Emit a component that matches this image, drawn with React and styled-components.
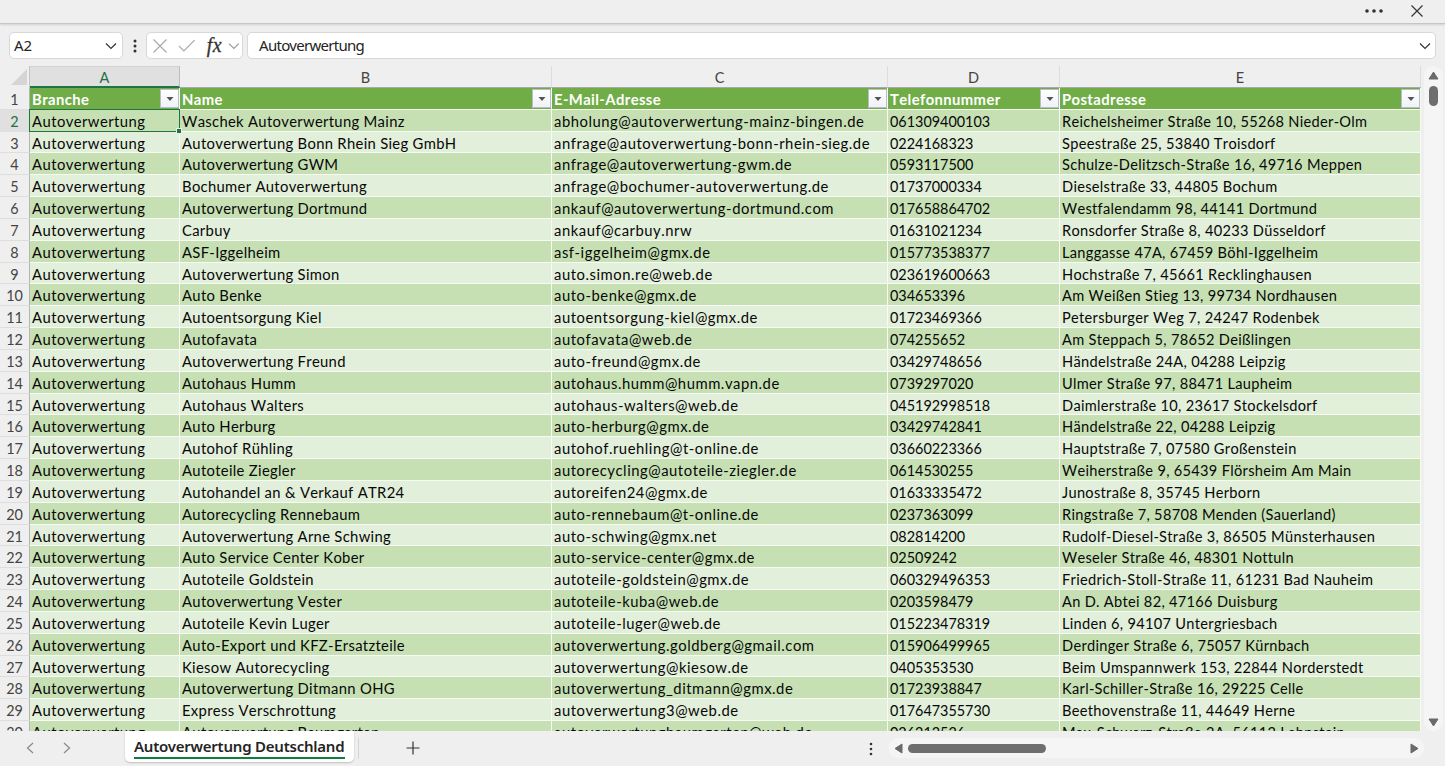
import React, { useState } from 'react';
import styled, { createGlobalStyle, css } from 'styled-components';

const COLUMNS = '150px 372px 336px 172px 361px';
const ROW_HEIGHT = 21.83;

const columns = [
    { id: 'A', title: 'Branche', size: 14.8, spacing: 0.44 },
    { id: 'B', title: 'Name', size: 14.8, spacing: 0.31 },
    { id: 'C', title: 'E-Mail-Adresse', size: 14.8, spacing: 0.54 },
    { id: 'D', title: 'Telefonnummer', size: 14.4, spacing: 0 },
    { id: 'E', title: 'Postadresse', size: 14.6, spacing: 0.3 },
];

const entries = [
    ['Waschek Autoverwertung Mainz', 'abholung@autoverwertung-mainz-bingen.de', '061309400103', 'Reichelsheimer Straße 10, 55268 Nieder-Olm'],
    ['Autoverwertung Bonn Rhein Sieg GmbH', 'anfrage@autoverwertung-bonn-rhein-sieg.de', '0224168323', 'Speestraße 25, 53840 Troisdorf'],
    ['Autoverwertung GWM', 'anfrage@autoverwertung-gwm.de', '0593117500', 'Schulze-Delitzsch-Straße 16, 49716 Meppen'],
    ['Bochumer Autoverwertung', 'anfrage@bochumer-autoverwertung.de', '01737000334', 'Dieselstraße 33, 44805 Bochum'],
    ['Autoverwertung Dortmund', 'ankauf@autoverwertung-dortmund.com', '017658864702', 'Westfalendamm 98, 44141 Dortmund'],
    ['Carbuy', 'ankauf@carbuy.nrw', '01631021234', 'Ronsdorfer Straße 8, 40233 Düsseldorf'],
    ['ASF-Iggelheim', 'asf-iggelheim@gmx.de', '015773538377', 'Langgasse 47A, 67459 Böhl-Iggelheim'],
    ['Autoverwertung Simon', 'auto.simon.re@web.de', '023619600663', 'Hochstraße 7, 45661 Recklinghausen'],
    ['Auto Benke', 'auto-benke@gmx.de', '034653396', 'Am Weißen Stieg 13, 99734 Nordhausen'],
    ['Autoentsorgung Kiel', 'autoentsorgung-kiel@gmx.de', '01723469366', 'Petersburger Weg 7, 24247 Rodenbek'],
    ['Autofavata', 'autofavata@web.de', '074255652', 'Am Steppach 5, 78652 Deißlingen'],
    ['Autoverwertung Freund', 'auto-freund@gmx.de', '03429748656', 'Händelstraße 24A, 04288 Leipzig'],
    ['Autohaus Humm', 'autohaus.humm@humm.vapn.de', '0739297020', 'Ulmer Straße 97, 88471 Laupheim'],
    ['Autohaus Walters', 'autohaus-walters@web.de', '045192998518', 'Daimlerstraße 10, 23617 Stockelsdorf'],
    ['Auto Herburg', 'auto-herburg@gmx.de', '03429742841', 'Händelstraße 22, 04288 Leipzig'],
    ['Autohof Rühling', 'autohof.ruehling@t-online.de', '03660223366', 'Hauptstraße 7, 07580 Großenstein'],
    ['Autoteile Ziegler', 'autorecycling@autoteile-ziegler.de', '0614530255', 'Weiherstraße 9, 65439 Flörsheim Am Main'],
    ['Autohandel an & Verkauf ATR24', 'autoreifen24@gmx.de', '01633335472', 'Junostraße 8, 35745 Herborn'],
    ['Autorecycling Rennebaum', 'auto-rennebaum@t-online.de', '0237363099', 'Ringstraße 7, 58708 Menden (Sauerland)'],
    ['Autoverwertung Arne Schwing', 'auto-schwing@gmx.net', '082814200', 'Rudolf-Diesel-Straße 3, 86505 Münsterhausen'],
    ['Auto Service Center Kober', 'auto-service-center@gmx.de', '02509242', 'Weseler Straße 46, 48301 Nottuln'],
    ['Autoteile Goldstein', 'autoteile-goldstein@gmx.de', '060329496353', 'Friedrich-Stoll-Straße 11, 61231 Bad Nauheim'],
    ['Autoverwertung Vester', 'autoteile-kuba@web.de', '0203598479', 'An D. Abtei 82, 47166 Duisburg'],
    ['Autoteile Kevin Luger', 'autoteile-luger@web.de', '015223478319', 'Linden 6, 94107 Untergriesbach'],
    ['Auto-Export und KFZ-Ersatzteile', 'autoverwertung.goldberg@gmail.com', '015906499965', 'Derdinger Straße 6, 75057 Kürnbach'],
    ['Kiesow Autorecycling', 'autoverwertung@kiesow.de', '0405353530', 'Beim Umspannwerk 153, 22844 Norderstedt'],
    ['Autoverwertung Ditmann OHG', 'autoverwertung_ditmann@gmx.de', '01723938847', 'Karl-Schiller-Straße 16, 29225 Celle'],
    ['Express Verschrottung', 'autoverwertung3@web.de', '017647355730', 'Beethovenstraße 11, 44649 Herne'],
    ['Autoverwertung Baumgarten', 'autoverwertungbaumgarten@web.de', '026212526', 'Max-Schwarz-Straße 2A, 56112 Lahnstein'],
];

const GlobalStyle = createGlobalStyle`
    * {
        box-sizing: border-box;
    }

    body {
        margin: 0;
        overflow: hidden;
    }
`;

const Window = styled.div`
    width: 1445px;
    height: 766px;
    display: flex;
    flex-direction: column;
    overflow: hidden;
    background: #efefef;
    color: #242424;
    font-family: 'Lato', 'Noto Sans', sans-serif;
`;

const TitleBar = styled.div`
    height: 24px;
    flex: none;
    display: flex;
    justify-content: flex-end;
    align-items: center;
    gap: 28px;
    padding: 0 22px 1px 0;
    border-bottom: 1px solid #c6c6c6;
    box-shadow: 0 1px 2px rgba(0, 0, 0, 0.12);
`;

const FormulaBar = styled.div`
    height: 42px;
    flex: none;
    display: flex;
    align-items: center;
    padding: 1px 9px 0;
`;

const Field = styled.div`
    height: 27px;
    display: flex;
    align-items: center;
    background: #fff;
    border: 1px solid #d8d8d8;
    border-radius: 5px;
    font-family: 'Noto Sans', sans-serif;
    font-size: 15px;
    line-height: 19px;
    letter-spacing: -0.7px;

    > span {
        padding-bottom: 1px;
    }
`;

const NameBox = styled(Field)`
    width: 114px;
    justify-content: space-between;
    padding: 0 5px 0 4px;
    letter-spacing: -0.2px;
`;

const DotsSlot = styled.div`
    width: 23px;
    display: grid;
    place-items: center;
`;

const FunctionBox = styled(Field)`
    width: 97px;
    padding: 0 2px 0 6px;
    margin-right: 4px;
`;

const FormulaInput = styled(Field)`
    flex: 1;
    justify-content: space-between;
    padding: 0 4px 0 11px;
`;

const Body = styled.div`
    height: 665px;
    flex: none;
    display: flex;
`;

const Sheet = styled.div`
    width: 1422px;
    overflow: hidden;
`;

const HeaderRow = styled.div`
    height: 22px;
    display: grid;
    grid-template-columns: 30px ${COLUMNS};
`;

const Corner = styled.div`
    border-right: 1px solid #c4c4c4;
    display: flex;
    justify-content: flex-end;
    align-items: flex-end;
    padding: 0 2px 3px 0;
`;

const ColumnHeader = styled.div`
    display: grid;
    place-items: center;
    padding-top: 2px;
    font-size: 14.5px;
    color: #444;
    border-right: 1px solid #dcdcdc;
    border-bottom: 1px solid #a9a9a9;

    ${({ $active }) =>
        $active &&
        css`
            color: #1e7145;
            background: #e0e0e0;
            border-top: 1px solid #d2d2d2;
            border-right-color: #bdbdbd;
            border-bottom: 2px solid #217346;
        `}
`;

const Row = styled.div`
    height: ${ROW_HEIGHT}px;
    display: grid;
    grid-template-columns: 30px ${COLUMNS};
    grid-template-rows: 100%;
`;

const RowNumber = styled.div`
    line-height: 23px;
    text-align: center;
    color: #444;
    font-size: 14.4px;
    border-right: 1px solid #b5b5b5;
    border-bottom: 1px solid #dedede;

    ${({ $active }) =>
        $active &&
        css`
            color: #1e7145;
            background: #e0e0e0;
            border-right: 1px solid #217346;
        `}
`;

const Cell = styled.div`
    position: relative;
    padding-left: 2px;
    line-height: 23px;
    font-size: ${({ $size }) => $size}px;
    font-kerning: none;
    letter-spacing: ${({ $spacing }) => $spacing}px;
    white-space: nowrap;
    color: #080808;
    background: ${({ $odd }) => ($odd ? '#e2efda' : '#c6e0b4')};
    border-right: 1px solid #f6fbf3;
    border-bottom: 1px solid #f6fbf3;
`;

const TitleCell = styled(Cell)`
    display: flex;
    justify-content: space-between;
    background: #70ad47;
    color: #fff;
    font-weight: 700;
`;

const FilterButton = styled.button`
    width: 19px;
    height: 19px;
    margin-top: 1px;
    padding: 0;
    display: grid;
    place-items: center;
    border: 1px solid #b9bcc9;
    background: linear-gradient(#fff, #f0f2f8);
`;

const Selection = styled.div`
    position: absolute;
    inset: -1px -1px -1px -1px;
    border: 1px solid #217346;
    z-index: 1;

    &::after {
        content: '';
        position: absolute;
        right: -2px;
        bottom: -2px;
        width: 4px;
        height: 4px;
        background: #217346;
        outline: 1px solid #e8f3e2;
    }
`;

const VerticalScroll = styled.div`
    width: 19px;
    margin-left: 2px;
    padding: 5px 0 4px;
    border-radius: 9px;
    background: #f5f5f5;
    display: flex;
    flex-direction: column;
    align-items: center;
`;

const VerticalThumb = styled.div`
    width: 9px;
    height: 20px;
    margin-top: 6px;
    margin-bottom: auto;
    border-radius: 5px;
    background: #6e6e6e;
`;

const Footer = styled.div`
    height: 35px;
    flex: none;
    display: flex;
    align-items: flex-start;
`;

const SheetNav = styled.div`
    width: 125px;
    height: 34px;
    display: flex;
    align-items: center;
    gap: 29px;
    padding-left: 26px;
`;

const Tab = styled.div`
    width: 229px;
    height: 31px;
    padding: 4px 9px 0;
    background: #fff;
    border-radius: 0 0 5px 5px;
    box-shadow: 0 1px 2px rgba(0, 0, 0, 0.2);

    span {
        display: block;
        height: 24px;
        line-height: 22px;
        border-bottom: 2px solid #107c41;
        font-family: 'Noto Sans', sans-serif;
        font-size: 15px;
        font-weight: 600;
        letter-spacing: -0.23px;
        white-space: nowrap;
    }
`;

const AddSheet = styled.div`
    height: 21px;
    margin: 7px 0 0 4px;
    padding: 3px 0 0 47px;
    border-left: 1px solid #d5d5d5;
    line-height: 0;
`;

const FooterDots = styled.div`
    margin: 11px 16px 0 auto;
    line-height: 0;
`;

const HorizontalScroll = styled.div`
    width: 535px;
    height: 20px;
    margin: 7px 21px 0 0;
    padding: 0 5px;
    border-radius: 9px;
    background: #f5f5f5;
    display: flex;
    align-items: center;
`;

const HorizontalThumb = styled.div`
    width: 138px;
    height: 9px;
    margin-left: 5px;
    margin-right: auto;
    border-radius: 5px;
    background: #6e6e6e;
`;

function Stroke({ w, h, d, color = '#333', width = 1.2 }) {
    return (
        <svg width={w} height={h} viewBox={`0 0 ${w} ${h}`} fill="none" stroke={color} strokeWidth={width}>
            <path d={d} />
        </svg>
    );
}

function Dots({ vertical, r = 1.5, step = 5 }) {
    const long = step * 2 + 4;
    return (
        <svg width={vertical ? 4 : long} height={vertical ? long : 4} fill="#333">
            {[0, 1, 2].map((i) => (
                <circle key={i} cx={vertical ? 2 : 2 + i * step} cy={vertical ? 2 + i * step : 2} r={r} />
            ))}
        </svg>
    );
}

function Arrow({ w, h, points }) {
    return (
        <svg width={w} height={h} fill="#6a6a6a" stroke="#6a6a6a" strokeLinejoin="round">
            <polygon points={points} />
        </svg>
    );
}

const CancelSlot = styled.div`
    display: flex;
    margin-right: 11px;
`;

const FxLabel = styled.span`
    width: 18px;
    margin: 0 4px 1px 11px;
    font-family: 'Liberation Serif', serif;
    font-style: italic;
    font-size: 20px;
    line-height: 20px;
    letter-spacing: 0.6px;
    color: #333;
    -webkit-text-stroke: 0.3px #333;
`;

function App() {
    const [selected, setSelected] = useState(2);

    return (
        <Window>
            <GlobalStyle />
            <TitleBar>
                <Dots r={1.8} step={7} />
                <Stroke w={12} h={12} d="M.5 .5L11.5 11.5M11.5 .5L.5 11.5" />
            </TitleBar>
            <FormulaBar>
                <NameBox>
                    <span>A{selected}</span>
                    <Stroke w={12} h={8} d="M1 1.5L6 6.5L11 1.5" />
                </NameBox>
                <DotsSlot>
                    <Dots vertical />
                </DotsSlot>
                <FunctionBox>
                    <CancelSlot>
                        <Stroke w={14} h={14} d="M.5 .5L13.5 13.5M13.5 .5L.5 13.5" color="#aaa" />
                    </CancelSlot>
                    <Stroke w={18} h={13} d="M1 7L6 12L17 1" color="#aaa" />
                    <FxLabel>fx</FxLabel>
                    <Stroke w={12} h={8} d="M1 1.5L6 6.5L11 1.5" color="#999" />
                </FunctionBox>
                <FormulaInput>
                    <span>Autoverwertung</span>
                    <Stroke w={12} h={8} d="M1 1.5L6 6.5L11 1.5" />
                </FormulaInput>
            </FormulaBar>
            <Body>
                <Sheet>
                    <HeaderRow>
                        <Corner>
                            <svg width="16" height="16" fill="#d5d5d5">
                                <polygon points="16,0 16,16 0,16" />
                            </svg>
                        </Corner>
                        {columns.map((column) => (
                            <ColumnHeader key={column.id} $active={column.id === 'A'}>
                                {column.id}
                            </ColumnHeader>
                        ))}
                    </HeaderRow>
                    <Row>
                        <RowNumber>1</RowNumber>
                        {columns.map((column) => (
                            <TitleCell key={column.id} $size={14.8} $spacing={0.4}>
                                {column.title}
                                <FilterButton>
                                    <svg width="8" height="4" fill="#555">
                                        <polygon points="0.5,0 7.5,0 4,4" />
                                    </svg>
                                </FilterButton>
                            </TitleCell>
                        ))}
                    </Row>
                    {entries.map((entry, i) => (
                        <Row key={entry[1]} onClick={() => setSelected(i + 2)}>
                            <RowNumber $active={selected === i + 2}>{i + 2}</RowNumber>
                            {['Autoverwertung', ...entry].map((value, c) => (
                                <Cell
                                    key={columns[c].id}
                                    $odd={i % 2 === 1}
                                    $size={columns[c].size}
                                    $spacing={columns[c].spacing}
                                >
                                    {value}
                                    {c === 0 && selected === i + 2 && <Selection />}
                                </Cell>
                            ))}
                        </Row>
                    ))}
                </Sheet>
                <VerticalScroll>
                    <Arrow w={11} h={9} points="5.5,1 10,8 1,8" />
                    <VerticalThumb />
                    <Arrow w={11} h={9} points="1,1 10,1 5.5,8" />
                </VerticalScroll>
            </Body>
            <Footer>
                <SheetNav>
                    <Stroke w={8} h={12} d="M7 1L1.5 6L7 11" color="#888" />
                    <Stroke w={8} h={12} d="M1 1L6.5 6L1 11" color="#888" />
                </SheetNav>
                <Tab>
                    <span>Autoverwertung Deutschland</span>
                </Tab>
                <AddSheet>
                    <Stroke w={14} h={14} d="M7 .5V13.5M.5 7H13.5" />
                </AddSheet>
                <FooterDots>
                    <Dots vertical r={1.3} />
                </FooterDots>
                <HorizontalScroll>
                    <Arrow w={9} h={11} points="1,5.5 8,1 8,10" />
                    <HorizontalThumb />
                    <Arrow w={9} h={11} points="1,1 8,5.5 1,10" />
                </HorizontalScroll>
            </Footer>
        </Window>
    );
}

export default App;
